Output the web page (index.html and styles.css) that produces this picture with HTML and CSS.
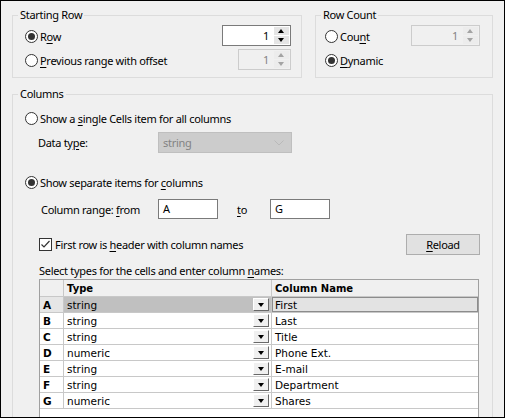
FILE: index.html
```html
<!DOCTYPE html>
<html lang="en">
    <head>
        <title>Cells Options</title>
        <meta charset="UTF-8">
        <link rel="stylesheet" href="styles.css">
    </head>

    <body>
        <div class="dialog">
            <div class="top">
                <fieldset class="group start-row">
                    <legend>Starting Row</legend>
                    <div class="inner">
                        <div class="opt">
                            <span class="radio on"></span>
                            <span class="text">R<u>o</u>w</span>
                            <div class="spin wide">
                                <span class="val">1</span>
                                <span class="arrows"><span class="up"></span><span class="down"></span></span>
                            </div>
                        </div>
                        <div class="opt">
                            <span class="radio"></span>
                            <span class="text"><u>P</u>revious range with offset</span>
                            <div class="spin narrow disabled">
                                <span class="val">1</span>
                                <span class="arrows"><span class="up"></span><span class="down"></span></span>
                            </div>
                        </div>
                    </div>
                </fieldset>

                <fieldset class="group row-count">
                    <legend>Row Count</legend>
                    <div class="inner">
                        <div class="opt">
                            <span class="radio"></span>
                            <span class="text">Cou<u>n</u>t</span>
                            <div class="spin wide disabled">
                                <span class="val">1</span>
                                <span class="arrows"><span class="up"></span><span class="down"></span></span>
                            </div>
                        </div>
                        <div class="opt">
                            <span class="radio on"></span>
                            <span class="text"><u>D</u>ynamic</span>
                        </div>
                    </div>
                </fieldset>
            </div>

            <fieldset class="group columns">
                <legend>Columns</legend>
                <div class="inner">
                    <div class="opt">
                        <span class="radio"></span>
                        <span class="text">Show a <u>s</u>ingle Cells item for all columns</span>
                    </div>
                    <div class="field datatype">
                        <span class="label">Data ty<u>p</u>e:</span>
                        <div class="combo">
                            <span>string</span>
                            <svg width="10" height="6" viewBox="0 0 10 6"><path d="M0.5 0.5 L5 5 L9.5 0.5" fill="none" stroke="#b9b9b9" stroke-width="1"/></svg>
                        </div>
                    </div>
                    <div class="opt separate">
                        <span class="radio on"></span>
                        <span class="text">Show separate items for <u>c</u>olumns</span>
                    </div>
                    <div class="field range">
                        <span class="label">Column range: <u>f</u>rom</span>
                        <div class="input">A</div>
                        <span class="to"><u>t</u>o</span>
                        <div class="input">G</div>
                    </div>
                    <div class="field header-row">
                        <span class="check">
                            <svg width="11" height="11" viewBox="0 0 11 11"><path d="M1.5 5.5 L4 8 L9.5 2" fill="none" stroke="#333" stroke-width="1.2"/></svg>
                        </span>
                        <span class="text">First row is <u>h</u>eader with column names</span>
                        <button class="btn"><u>R</u>eload</button>
                    </div>
                    <p class="hint">Select types for the cells and enter column <u>n</u>ames:</p>

                    <div class="grid">
                        <table>
                            <colgroup>
                                <col style="width: 24px">
                                <col style="width: 208px">
                                <col style="width: 206px">
                            </colgroup>
                            <thead>
                                <tr><th class="corner"></th><th>Type</th><th class="last">Column Name</th></tr>
                            </thead>
                            <tbody id="rows"></tbody>
                        </table>
                    </div>
                </div>
            </fieldset>
        </div>

        <script>
            const cols = [
                ["A", "string", "First"],
                ["B", "string", "Last"],
                ["C", "string", "Title"],
                ["D", "numeric", "Phone Ext."],
                ["E", "string", "E-mail"],
                ["F", "string", "Department"],
                ["G", "numeric", "Shares"]
            ];
            const body = document.getElementById("rows");
            cols.forEach((c, i) => {
                const row = document.createElement("tr");
                if (i === 0) row.className = "selected";
                row.innerHTML =
                    `<th class="rh">${c[0]}</th>` +
                    `<td class="type"><div class="cell-flex"><span>${c[1]}</span><span class="drop"></span></div></td>` +
                    `<td class="name last">${c[2]}</td>`;
                body.appendChild(row);
            });
        </script>
    </body>
</html>
```

FILE: styles.css
```css
body {
    margin: 0;
    font-family: "Noto Sans", sans-serif;
    font-size: 11px;
    letter-spacing: -0.3px;
    color: #000;
}
u {
    text-decoration-thickness: 1px;
    text-underline-offset: 2px;
}
.dialog {
    width: 505px;
    height: 418px;
    box-sizing: border-box;
    border: 1px solid #000;
    background-color: #f0f0f0;
    padding: 6px 11px 0 11px;
    overflow: hidden;
}
.top {
    display: flex;
    gap: 13px;
}
.group {
    margin: 0;
    padding: 0;
    border: 1px solid #dcdcdc;
    min-width: 0;
}
.group legend {
    margin-left: 5px;
    padding: 0 2px;
    line-height: 16px;
}
.start-row {
    width: 290px;
    box-sizing: border-box;
}
.row-count {
    width: 178px;
    box-sizing: border-box;
}
.start-row .inner {
    padding: 2px 10px 7px 12px;
}
.row-count .inner {
    padding: 2px 12px 7px 9px;
}
.opt {
    display: flex;
    align-items: center;
    height: 21px;
}
.opt + .opt {
    margin-top: 3px;
}
.opt .text {
    margin-left: 2px;
    padding-top: 2px;
}
.radio {
    width: 13px;
    height: 13px;
    box-sizing: border-box;
    border: 1px solid #333;
    border-radius: 50%;
    background-color: #fff;
    position: relative;
    flex-shrink: 0;
    margin-top: 2px;
}
.radio.on::after {
    content: "";
    position: absolute;
    left: 2px;
    top: 2px;
    width: 7px;
    height: 7px;
    border-radius: 50%;
    background-color: #333;
}

.spin {
    margin-left: auto;
    height: 21px;
    box-sizing: border-box;
    border: 1px solid #7a7a7a;
    background-color: #fff;
    display: flex;
    padding: 1px;
}
.spin.wide {
    width: 69px;
}
.spin.narrow {
    width: 53px;
}
.spin .val {
    flex: 1;
    text-align: right;
    padding-right: 5px;
    line-height: 17px;
}
.spin .arrows {
    width: 15px;
    display: flex;
    flex-direction: column;
    gap: 1px;
}
.spin .up,
.spin .down {
    flex: 1;
    background-color: #e5e5e5;
    position: relative;
}
.spin .up::after,
.spin .down::after {
    content: "";
    position: absolute;
    left: 4px;
    border-left: 3.5px solid transparent;
    border-right: 3.5px solid transparent;
}
.spin .up::after {
    top: 2px;
    border-bottom: 4px solid #000;
}
.spin .down::after {
    top: 2px;
    border-top: 4px solid #000;
}
.spin.disabled {
    border-color: #cccccc;
    background-color: #f0f0f0;
    color: #838383;
}
.spin.disabled .up,
.spin.disabled .down {
    background-color: #ececec;
}
.spin.disabled .up::after {
    border-bottom-color: #a3a3a3;
}
.spin.disabled .down::after {
    border-top-color: #a3a3a3;
}

.columns {
    margin-top: 8px;
    height: 340px;
}
.columns .inner {
    padding: 5px 12px 0 12px;
}
.field {
    display: flex;
    align-items: center;
}
.datatype {
    margin-top: 4px;
    height: 21px;
    padding-left: 13px;
}
.datatype .label {
    width: 120px;
}
.combo {
    width: 134px;
    height: 21px;
    box-sizing: border-box;
    border: 1px solid #bfbfbf;
    background-color: #cccccc;
    color: #838383;
    display: flex;
    align-items: center;
    justify-content: space-between;
    padding: 0 7px 0 4px;
}
.opt.separate {
    margin-top: 18px;
}
.range {
    margin-top: 7px;
    height: 20px;
    padding-left: 16px;
}
.range .label {
    width: 117px;
}
.input {
    width: 60px;
    height: 20px;
    box-sizing: border-box;
    border: 1px solid #7a7a7a;
    background-color: #fff;
    padding-left: 4px;
    line-height: 18px;
}
.range .to {
    width: 52px;
    padding-left: 19px;
    box-sizing: border-box;
}
.header-row {
    margin-top: 15px;
    height: 20px;
    padding-left: 14px;
}
.check {
    width: 13px;
    height: 13px;
    box-sizing: border-box;
    border: 1px solid #333;
    background-color: #fff;
    display: flex;
    align-items: center;
    justify-content: center;
}
.header-row .text {
    margin-left: 3px;
}
.btn {
    margin-left: auto;
    width: 74px;
    height: 21px;
    border: 1px solid #adadad;
    background-color: #e1e1e1;
    font-family: inherit;
    font-size: inherit;
    letter-spacing: inherit;
    padding: 0;
}
.hint {
    margin: 9px 0 0 14px;
    line-height: 16px;
}

.grid {
    margin: 0 0 0 14px;
    width: 440px;
    height: 200px;
    box-sizing: border-box;
    border: 1px solid #a0a0a0;
    border-bottom: 0;
    background-color: #fff;
}
table {
    border-spacing: 0;
    border-collapse: separate;
    table-layout: fixed;
    width: 438px;
    font-family: "DejaVu Sans", sans-serif;
    font-size: 10.5px;
    letter-spacing: 0;
}
th,
td {
    padding: 0 0 0 3px;
    border-right: 1px solid #c8c8c8;
    border-bottom: 1px solid #c8c8c8;
    height: 15px;
    text-align: left;
    white-space: nowrap;
    overflow: hidden;
}
thead th {
    background-color: #f0f0f0;
    height: 16px;
    font-weight: bold;
    font-size: 10px;
}
.last {
    border-right: 0;
}
.rh {
    font-weight: bold;
    padding-left: 3px;
}
.cell-flex {
    display: flex;
    align-items: center;
    justify-content: space-between;
}
.drop {
    width: 16px;
    height: 13px;
    box-sizing: border-box;
    margin-right: 2px;
    background-color: #f0f0f0;
    border: 1px solid;
    border-color: #fff #696969 #696969 #fff;
    position: relative;
}
.drop::after {
    content: "";
    position: absolute;
    left: 4px;
    top: 4px;
    border-left: 3.5px solid transparent;
    border-right: 3.5px solid transparent;
    border-top: 4px solid #000;
}
.selected .rh {
    background-color: #e6e6e6;
}
.selected .type {
    background-color: #c0c0c0;
}
.selected .name {
    background-color: #e3e3e3;
    box-shadow: inset 0 0 0 1px #8c8c8c;
}
```
